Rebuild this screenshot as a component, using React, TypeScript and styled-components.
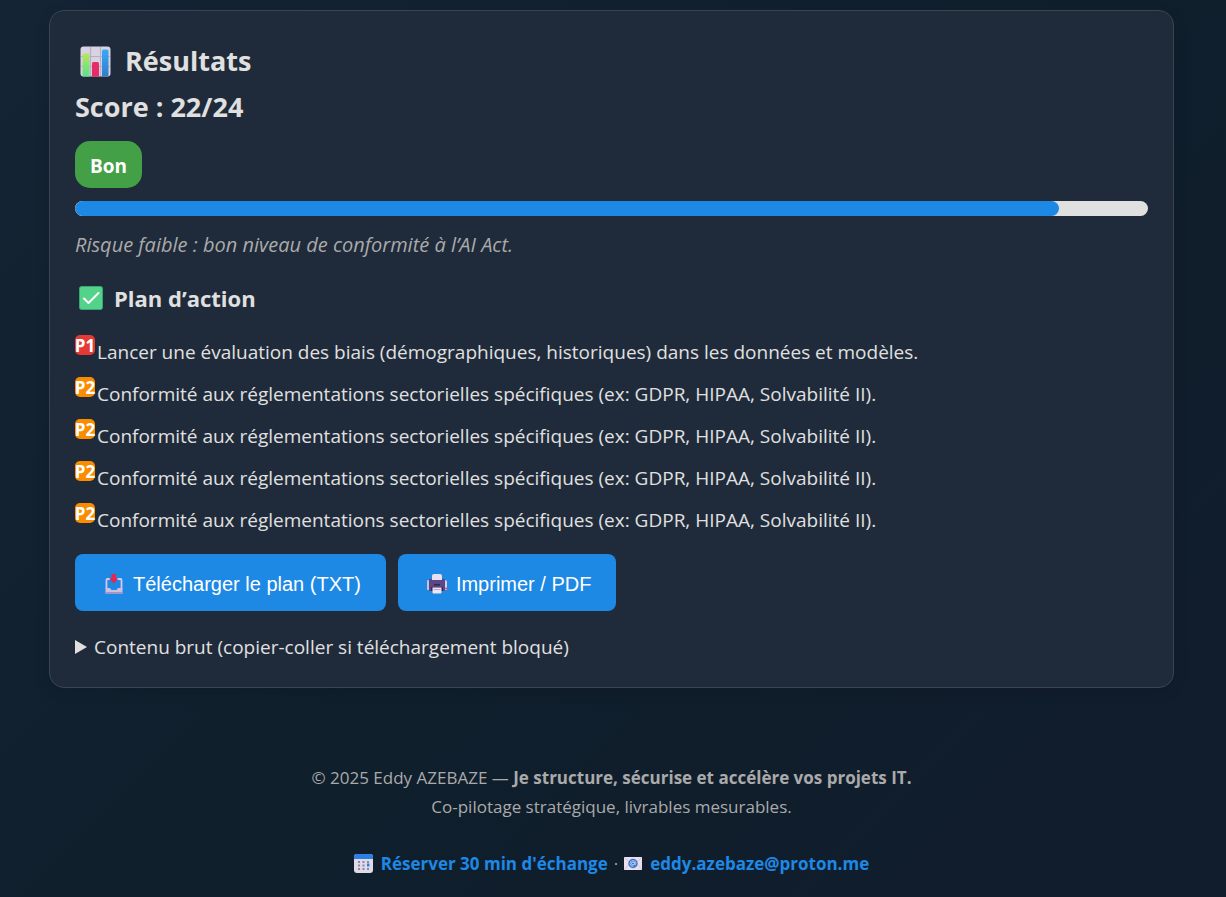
import React from "react";
import styled, { createGlobalStyle } from "styled-components";

const GlobalStyle = createGlobalStyle`
  *, *::before, *::after { box-sizing: border-box; }
  html { min-height: 100%; background: linear-gradient(135deg, #142434 0%, #0f1f2c 50%, #111c2c 100%); }
  body {
    margin: 0;
    color: #e0e0e0;
    font-family: "Segoe UI", "Open Sans", "Noto Sans", sans-serif;
    font-size: 19px;
    line-height: 30px;
  }
`;

const Page = styled.div`
  padding: 10px 52px 18px 49px;
`;

const Card = styled.main`
  padding: 27px 25px 25px;
  background: #1f2b3a;
  border: 1px solid #384553;
  border-radius: 15px;
  box-shadow: 0 4px 15px rgba(0, 0, 0, 0.1);
`;

const Title = styled.h2`
  display: flex;
  align-items: center;
  gap: 14px;
  margin: 0;
  padding-left: 5px;
  font-size: 27px;
  line-height: 46px;
`;

const Score = styled.p`
  margin: 0;
  font-size: 27px;
  font-weight: 700;
  line-height: 46px;
`;

const Level = styled.div`
  width: fit-content;
  margin-top: 11px;
  padding: 10px 15px 7px;
  border-radius: 15px;
  background: #43a047;
  color: #fff;
  font-weight: 700;
`;

const Track = styled.div`
  height: 15px;
  margin-top: 13px;
  overflow: hidden;
  border-radius: 8px;
  background: #e0e0e0;
`;

const Fill = styled.div`
  height: 100%;
  border-radius: 8px;
  background: #1e88e5;
`;

const Summary = styled.p`
  margin: 14px 0 0;
  color: #aaa;
  font-size: 20px;
  font-style: italic;
`;

const PlanTitle = styled.h3`
  display: flex;
  align-items: center;
  gap: 11px;
  margin: 21px 0 16px;
  padding-left: 4px;
  font-size: 22px;
  line-height: 34px;
`;

const Actions = styled.ul`
  margin: 0;
  padding: 0;
  list-style: none;
`;

const Action = styled.li`
  display: flex;
  align-items: flex-start;
  gap: 2px;
  height: 42px;
  line-height: 42px;
`;

const Priority = styled.span<{ $level: 1 | 2 }>`
  display: flex;
  justify-content: center;
  width: 20px;
  height: 20px;
  margin-top: 4px;
  border-radius: 5px;
  background: ${({ $level }) => ($level === 1 ? "#e53935" : "#fb8c00")};
  color: #fff;
  font-size: 17px;
  font-weight: 700;
  line-height: 22px;
`;

const Buttons = styled.div`
  display: flex;
  flex-wrap: wrap;
  gap: 12px;
  margin-top: 13px;
`;

const Button = styled.button`
  display: flex;
  align-items: center;
  gap: 9px;
  height: 57px;
  padding: 3px 25px 0 29px;
  border: 0;
  border-radius: 8px;
  background: #1e88e5;
  color: #fff;
  font-family: Arial, "Liberation Sans", sans-serif;
  font-size: 20px;
  cursor: pointer;
`;

const Raw = styled.details`
  margin-top: 21px;

  summary {
    display: flex;
    align-items: center;
    gap: 7px;
    cursor: pointer;
    list-style: none;
  }

  summary::before {
    content: "";
    border-top: 7px solid transparent;
    border-bottom: 7px solid transparent;
    border-left: 12px solid #e0e0e0;
  }

  &[open] summary::before { transform: rotate(90deg); }
`;

const Footer = styled.footer`
  margin-top: 75px;
  color: #aaa;
  font-size: 17px;
  line-height: 29px;
  text-align: center;

  p { margin: 0; }
`;

const Contacts = styled.div`
  display: flex;
  flex-wrap: wrap;
  justify-content: center;
  gap: 6px;
  margin-top: 28px;
`;

const ContactLink = styled.a`
  display: flex;
  align-items: center;
  gap: 8px;
  color: #1e88e5;
  font-weight: 700;
  text-decoration: none;
`;

const ChartIcon = () => (
  <svg width="31" height="31" viewBox="0 0 31 31" aria-hidden="true">
    <rect x="0.5" y="0.5" width="30" height="30" rx="3" fill="#d8d3e2" />
    <path d="M10.5 1v29M20.5 1v29M1 10.5h29M1 20.5h29" stroke="#b6afc2" strokeWidth="1.2" />
    <path d="M2.500 9q0-1.500 1.500-1.500h4Q9.500 7.500 9.500 9V30.500h-7z" fill="url(#chart-green)" />
    <path d="M12 17.500q0-1.500 1.500-1.500h4q1.500 0 1.500 1.500v13h-7z" fill="#e52b68" />
    <path d="M22 5q0-1.500 1.500-1.500h3.500Q28.500 3.500 28.500 5v25.500H22z" fill="url(#chart-blue)" />
    <defs>
      <linearGradient id="chart-green" x2="0" y2="1">
        <stop stopColor="#b9e65b" /><stop offset="1" stopColor="#5bdf89" />
      </linearGradient>
      <linearGradient id="chart-blue" x2="0" y2="1">
        <stop stopColor="#35aaf8" /><stop offset="1" stopColor="#367bcb" />
      </linearGradient>
    </defs>
  </svg>
);

const CheckIcon = () => (
  <svg width="24" height="24" viewBox="0 0 24 24" aria-hidden="true">
    <rect x="0.5" y="0.5" width="23" height="23" rx="2" fill="#53d389" stroke="#36a873" />
    <path d="M5 12.500l4.500 4.500L19.500 7" fill="none" stroke="#fff" strokeWidth="2" strokeLinecap="round" strokeLinejoin="round" />
  </svg>
);

const InboxIcon = () => (
  <svg width="20" height="22" viewBox="0 0 20 22" aria-hidden="true">
    <path d="M6 6H3.500Q2.500 6 2.500 7v9M13 6h3.500q1 0 1 1v9" fill="none" stroke="#d5c9e4" strokeWidth="1.800" />
    <path d="M1.500 15H6l1.500 2h5l1.500-2h4.500v5.500h-17z" fill="#cdbfdf" />
    <path d="M1.500 19h17v1.500h-17z" fill="#aa91c4" />
    <path d="M7.500 1h4.500v4.500h2.500l-4.700 5-4.800-5h2.500z" fill="#df2852" />
  </svg>
);

const PrinterIcon = () => (
  <svg width="20" height="22" viewBox="0 0 20 22" aria-hidden="true">
    <path d="M0 8q0-1 1-1h2v10H0z" fill="#c8bddc" />
    <path d="M17 7h1q2 0 2 2v8h-3z" fill="#d7cce5" />
    <path d="M2 7q0-1 1-1h14q1 0 1 1v10q0 1-1 1H3q-1 0-1-1z" fill="#5b4687" />
    <path d="M5 7V3q0-2 2-2h6q2 0 2 2v4z" fill="#e7dff0" />
    <path d="M7 11h6v1.500H7z" fill="#332849" />
    <path d="M4 14h12v4H4z" fill="#39294f" />
    <path d="M5.500 14.500h9v5q0 1-1 1h-7q-1 0-1-1z" fill="#ede6f4" />
    <path d="M6.500 16.500h7" stroke="#b9aacb" />
    <circle cx="19" cy="15.500" r="1" fill="#ee4057" />
  </svg>
);

const CalendarIcon = () => (
  <svg width="19" height="19" viewBox="0 0 19 19" aria-hidden="true">
    <rect width="19" height="19" rx="3" fill="#e0d9ea" />
    <path d="M0 5V3q0-3 3-3h13q3 0 3 3v2z" fill="#2a80e4" />
    <path d="M4 8h2m2.500 0h2m2.500 0h2M4 11.500h2m2.500 0h2M4 15h2m2.500 0h2m2.500 0h2" stroke="#8d869e" strokeWidth="1.800" />
    <path d="M13 11h2.500" stroke="#2884df" strokeWidth="3" />
  </svg>
);

const MailIcon = () => (
  <svg width="18" height="13" viewBox="0 0 18 13" aria-hidden="true">
    <rect width="18" height="13" fill="#eadfee" />
    <path d="M0 0l6 6-6 7M18 0l-6 6 6 7" fill="none" stroke="#d4c5dc" />
    <circle cx="9" cy="6.500" r="4.700" fill="#3c75cb" />
    <circle cx="9" cy="6.500" r="1.500" fill="none" stroke="#d9e5fa" strokeWidth="0.900" />
    <path d="M10.700 4.700v2.200q0 1 .7.800.8-.3.500-1.800Q11.300 3.500 9 3.500 6 3.600 6 6.600q.2 3 3.300 3" fill="none" stroke="#b7cff5" strokeWidth="0.800" />
  </svg>
);

const sector = "Conformité aux réglementations sectorielles spécifiques (ex: GDPR, HIPAA, Solvabilité II).";

const actions: { level: 1 | 2; text: string }[] = [
  { level: 1, text: "Lancer une évaluation des biais (démographiques, historiques) dans les données et modèles." },
  { level: 2, text: sector },
  { level: 2, text: sector },
  { level: 2, text: sector },
  { level: 2, text: sector },
];

const score = 22;
const total = 24;

export default function App() {
  return (
    <>
      <GlobalStyle />
      <Page>
        <Card>
          <Title><ChartIcon />Résultats</Title>
          <Score>Score : {score}/{total}</Score>
          <Level>Bon</Level>
          <Track role="progressbar" aria-label="Score" aria-valuenow={score} aria-valuemin={0} aria-valuemax={total}>
            <Fill style={{ width: `${(score / total) * 100}%` }} />
          </Track>
          <Summary>Risque faible : bon niveau de conformité à l’AI Act.</Summary>
          <PlanTitle><CheckIcon />Plan d’action</PlanTitle>
          <Actions>
            {actions.map(({ level, text }, i) => (
              <Action key={i}>
                <Priority $level={level}>P{level}</Priority>
                <span>{text}</span>
              </Action>
            ))}
          </Actions>
          <Buttons>
            <Button type="button"><InboxIcon />Télécharger le plan (TXT)</Button>
            <Button type="button" onClick={() => window.print()}><PrinterIcon />Imprimer / PDF</Button>
          </Buttons>
          <Raw>
            <summary>Contenu brut (copier-coller si téléchargement bloqué)</summary>
          </Raw>
        </Card>
        <Footer>
          <p>© 2025 Eddy AZEBAZE — <strong>Je structure, sécurise et accélère vos projets IT.</strong></p>
          <p>Co-pilotage stratégique, livrables mesurables.</p>
          <Contacts>
            <ContactLink href="#reserver"><CalendarIcon />Réserver 30 min d'échange</ContactLink>
            <span>·</span>
            <ContactLink href="mailto:eddy.azebaze@proton.me"><MailIcon />eddy.azebaze@proton.me</ContactLink>
          </Contacts>
        </Footer>
      </Page>
    </>
  );
}
